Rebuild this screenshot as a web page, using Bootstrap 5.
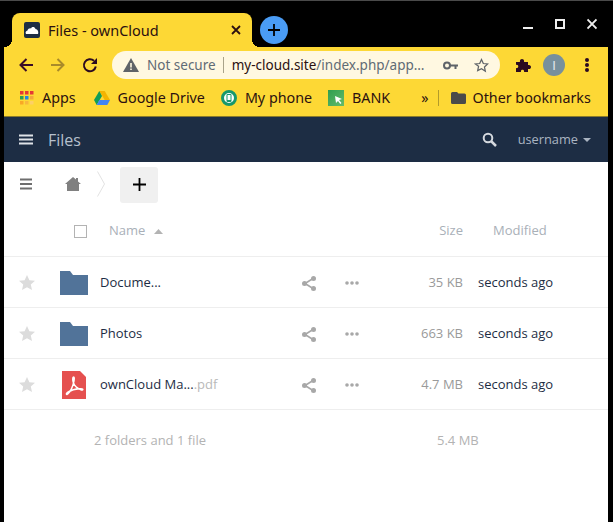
<!DOCTYPE html>
<html lang="en">
<head>
  <meta charset="UTF-8" />
  <meta name="viewport" content="width=device-width, initial-scale=1" />
  <title>Files - ownCloud</title>
  <link href="https://cdn.jsdelivr.net/npm/bootstrap@5.3.0/dist/css/bootstrap.min.css" rel="stylesheet" />
  <style>
    html, body { height: 100%; }
    body {
      background: #000;
      overflow: hidden;
      font-family: "Open Sans", sans-serif;
      color: #1d2d44;
    }
    .top-edge { height: 1px; background: #4a4a4a; }
    .win-frame { margin: 0 5px 0 4px; height: 521px; }
    .tab-strip { height: 46px; padding-left: 8px; }
    .file-tab {
      width: 240px;
      height: 34px;
      margin-top: 12px;
      padding: 0 11px 0 12px;
      background: #fdd835;
      border-radius: 8px 8px 0 0;
      color: #2b1010;
      font: 14.5px "Noto Sans", sans-serif;
      position: relative;
    }
    .file-tab::before, .file-tab::after {
      content: "";
      position: absolute;
      bottom: 0;
      width: 8px;
      height: 8px;
    }
    .file-tab::before { left: -8px; background: radial-gradient(circle at 0 0, transparent 8px, #fdd835 8px); }
    .file-tab::after { right: -8px; background: radial-gradient(circle at 100% 0, transparent 8px, #fdd835 8px); }
    .tab-logo { width: 16px; height: 16px; border-radius: 2px; background: #1d2d44; margin-right: 8px; }
    .new-tab { width: 28px; height: 28px; margin: 15px 0 0 8px; border-radius: 50%; background: #4a9cf5; }
    .win-btns { gap: 22px; padding: 16px 11px 0 0; }
    .tool-row { height: 36px; background: #fdd835; }
    .tool-btn { width: 16px; flex: none; }
    .tool-first { margin-left: 14px; }
    .url-pill {
      width: 388px;
      height: 28px;
      margin-left: 14px;
      padding: 0 11px 0 11px;
      border-radius: 14px;
      background: #fff8e1;
      font: 13.5px "Noto Sans", sans-serif;
      white-space: nowrap;
      flex: none;
    }
    .url-note { color: #5f6b75; }
    .url-sep { width: 1px; height: 16px; background: #a9a389; margin: 0 8px 0 7px; }
    .url-host { color: #2b1010; }
    .url-path { color: #5f6b75; }
    .ext-icon { margin-left: 15px; flex: none; }
    .avatar-dot { width: 22px; height: 22px; margin-left: 12px; border-radius: 50%; background: #78909c; color: #e3e9ec; font: 13px "Liberation Sans", sans-serif; flex: none; }
    .tool-dots { margin-left: 20px; gap: 1px; flex: none; }
    .tool-dots span { display: block; width: 4px; height: 4px; border-radius: 50%; background: #2b0a20; }
    .mark-row {
      height: 34px;
      padding-bottom: 4px;
      background: #fdd835;
      border-bottom: 1px solid #8a7a2a;
      color: #2b1010;
      font: 14.3px "Noto Sans", sans-serif;
      white-space: nowrap;
    }
    .mark-sep { width: 1px; height: 16px; background: #b39b2a; margin: 0 12px 0 9px; }
    .mark-more { margin-left: 31px; }
    .drive-icon { margin: 0 8px 0 18px; flex: none; }
    .folder-mark { margin-right: 7px; flex: none; }
    .app-head { height: 45px; background: #1d2d44; color: #c9d0da; padding: 0 17px 0 15px; }
    .app-title { font-size: 16px; margin-left: 15px; color: #b6c0cd; }
    .app-user { font-size: 12.8px; color: #aab4c1; margin-left: 21px; padding-top: 1px; }
    .caret-down { width: 0; height: 0; border: 4px solid transparent; border-top-color: #aab4c1; border-bottom-width: 0; margin-left: 5px; }
    .files-pane { background: #fff; height: 360px; font-size: 13px; }
    .crumb-row { height: 43px; padding: 1px 0 0 16px; }
    .crumb-home { margin-left: 33px; }
    .crumb-step { margin-left: 16px; }
    .crumb-add { width: 38px; height: 36px; margin: 1px 0 0 14px; border-radius: 3px; background: #f0f0f0; }
    .list-head { height: 52px; padding-top: 1px; color: #a9b0b8; font-size: 13px; border-bottom: 1px solid #eee; }
    .file-line { height: 51px; padding-top: 1px; border-bottom: 1px solid #eee; color: #1d2d44; }
    .head-pick { width: 105px; flex: none; padding-left: 70px; }
    .head-name { width: 286px; flex: none; }
    .head-size { width: 68px; flex: none; text-align: right; }
    .head-mod { padding-left: 30px; white-space: nowrap; }
    .col-star { width: 56px; padding-left: 15px; flex: none; }
    .col-star svg { display: block; }
    .col-name { width: 242px; flex: none; white-space: nowrap; }
    .col-share { width: 43px; flex: none; }
    .col-more { width: 50px; flex: none; }
    .col-size { width: 68px; flex: none; text-align: right; color: #9a9a9a; }
    .col-mod { padding-left: 15px; white-space: nowrap; }
    .file-icon { margin-right: 12px; flex: none; }
    .pick-box { width: 13px; height: 13px; border: 1px solid #b3b3b3; }
    .sort-caret { margin-left: 9px; }
    .ext-part { color: #b9b9b9; }
    .sum-line { height: 61px; color: #b3b3b3; }
    .sum-text { width: 377px; flex: none; padding-left: 34px; margin-left: 56px; }
  </style>
</head>
<body>
  <div class="top-edge"></div>
  <div class="win-frame d-flex flex-column">
    <div class="tab-strip d-flex flex-shrink-0">
      <div class="file-tab d-flex align-items-center">
        <span class="tab-logo d-flex align-items-center justify-content-center flex-shrink-0">
          <svg width="14" height="9" viewBox="0 0 14 9"><path fill="#fff" d="M1 8c-1-2 0-3 1.500-3.500C3 2.500 5 2 6 2.500 7 .5 9.500.5 10.500 3 12.500 3 14 6 13 8z"/></svg>
        </span>
        <span class="flex-grow-1">Files - ownCloud</span>
        <svg width="10" height="10" viewBox="0 0 10 10"><path d="M1 1l8 8M9 1l-8 8" stroke="#2b1010" stroke-width="1.800"/></svg>
      </div>
      <div class="new-tab d-flex align-items-center justify-content-center">
        <svg width="14" height="14" viewBox="0 0 14 14"><path d="M7 1v12M1 7h12" stroke="#000" stroke-width="1.800"/></svg>
      </div>
      <div class="win-btns d-flex ms-auto">
        <svg width="10" height="14" viewBox="0 0 10 14"><path d="M0 11h10" stroke="#eee" stroke-width="2"/></svg>
        <svg width="10" height="14" viewBox="0 0 10 14"><rect x="1" y="3" width="8" height="8" fill="none" stroke="#eee" stroke-width="2"/></svg>
        <svg width="10" height="14" viewBox="0 0 10 14"><path d="M.5 2.500l9 9M9.500 2.500l-9 9" stroke="#eee" stroke-width="1.800"/></svg>
      </div>
    </div>

    <div class="tool-row d-flex align-items-center flex-shrink-0">
      <svg class="tool-first me-3 tool-btn" height="16" viewBox="0 0 16 16"><path d="M15 8H2.500M8.500 2L2.500 8l6 6" fill="none" stroke="#3a0c26" stroke-width="2"/></svg>
      <svg class="me-3 tool-btn" height="16" viewBox="0 0 16 16"><path d="M1 8h12.500M7.500 2l6 6-6 6" fill="none" stroke="#a98a2a" stroke-width="2"/></svg>
      <svg class="tool-btn" height="16" viewBox="0 0 16 16"><path d="M13.800 9.500A6 6 0 1 1 12 3.800" fill="none" stroke="#2b0a20" stroke-width="2"/><path d="M15 1v6H9z" fill="#2b0a20"/></svg>
      <div class="url-pill d-flex align-items-center">
        <svg width="16" height="14" viewBox="0 0 16 14" class="flex-shrink-0 me-2"><path d="M8 0l8 14H0z" fill="#5f6368"/><path d="M7.200 5h1.600v4.500H7.200zM7.200 10.500h1.600V12H7.200z" fill="#fff8e1"/></svg>
        <span class="url-note">Not secure</span>
        <span class="url-sep"></span>
        <span class="url-host">my-cloud.site</span><span class="url-path">/index.php/app…</span>
        <svg width="15" height="9" viewBox="0 0 15 9" class="ms-auto"><circle cx="4" cy="4.500" r="3" fill="none" stroke="#5f6368" stroke-width="2"/><path d="M7 3.500h8v2h-1.500V8h-2V5.500H7z" fill="#5f6368"/></svg>
        <svg width="15" height="15" viewBox="0 0 24 24" class="ms-3"><path d="M12 2.500l2.900 6.300 6.900.8-5.100 4.700 1.400 6.800L12 17l-6.100 3.100 1.400-6.800L2.200 9.600l6.900-.8z" fill="none" stroke="#5f6368" stroke-width="2"/></svg>
      </div>
      <svg width="16" height="16" viewBox="0 0 16 16" class="ext-icon"><path d="M1 5h4c-1-4 5-4 4 0h4v3c4-1 4 5 0 4v3H9c1-3-4-3-3 0H1v-4c3 1 3-4 0-3z" fill="#2b0a20"/></svg>
      <span class="avatar-dot d-flex align-items-center justify-content-center">I</span>
      <div class="tool-dots d-flex flex-column"><span></span><span></span><span></span></div>
    </div>

    <div class="mark-row d-flex align-items-center flex-shrink-0">
      <svg width="14" height="14" viewBox="0 0 14 14" class="ms-3 me-2 flex-shrink-0">
        <rect width="3.500" height="3.500" fill="#e53935"/><rect x="5" width="3.500" height="3.500" fill="#e53935"/><rect x="10" width="3.500" height="3.500" fill="#e53935"/>
        <rect y="5" width="3.500" height="3.500" fill="#2e9e4f"/><rect x="5" y="5" width="3.500" height="3.500" fill="#1e88e5"/><rect x="10" y="5" width="3.500" height="3.500" fill="#f4a93a"/>
        <rect y="10" width="3.500" height="3.500" fill="#f9a825"/><rect x="5" y="10" width="3.500" height="3.500" fill="#f6b73c"/><rect x="10" y="10" width="3.500" height="3.500" fill="#fdd066"/>
      </svg>
      <span>Apps</span>
      <svg width="16" height="14" viewBox="0 0 16 14" class="drive-icon"><path d="M5.300 0h5.400L16 9h-5.300z" fill="#f4b400"/><path d="M5.300 0L0 9l2.700 5L8 5z" fill="#0f9d58"/><path d="M2.700 14h10.600L16 9H5.300z" fill="#4285f4"/></svg>
      <span>Google Drive</span>
      <svg width="16" height="16" viewBox="0 0 16 16" class="ms-3 me-2 flex-shrink-0"><circle cx="8" cy="8" r="6.500" fill="#fff" stroke="#17986b" stroke-width="3"/><rect x="5.500" y="4" width="5" height="8" rx="1" fill="#17986b"/><rect x="6.500" y="5" width="3" height="5" fill="#fff"/></svg>
      <span>My phone</span>
      <svg width="16" height="16" viewBox="0 0 16 16" class="ms-3 me-2 flex-shrink-0"><defs><linearGradient id="bankFill" x1="0" y1="0" x2="1" y2="1"><stop offset="0" stop-color="#2e9e4f"/><stop offset="1" stop-color="#66bb6a"/></linearGradient></defs><rect width="16" height="16" fill="url(#bankFill)"/><path d="M7 6l7 3-3 1 2.500 3-1.200 1-2.300-3-2 2z" fill="#fff"/></svg>
      <span>BANK</span>
      <span class="mark-more">»</span>
      <span class="mark-sep"></span>
      <svg width="15" height="12" viewBox="0 0 15 12" class="folder-mark"><path d="M0 1.500A1.500 1.500 0 0 1 1.500 0H6l1.500 1.500H13.500A1.500 1.500 0 0 1 15 3v7.500A1.500 1.500 0 0 1 13.500 12h-12A1.500 1.500 0 0 1 0 10.500z" fill="#4a4a4a"/></svg>
      <span>Other bookmarks</span>
    </div>

    <header class="app-head d-flex align-items-center flex-shrink-0">
      <svg width="14" height="11" viewBox="0 0 14 11"><path d="M0 1.500h14M0 5.500h14M0 9.500h14" stroke="#dfe3e8" stroke-width="2"/></svg>
      <span class="app-title">Files</span>
      <svg width="15" height="15" viewBox="0 0 15 15" class="ms-auto"><circle cx="6" cy="6" r="4.300" fill="none" stroke="#d5d9df" stroke-width="2"/><path d="M9 9l5 5" stroke="#d5d9df" stroke-width="2.500"/></svg>
      <span class="app-user">username</span>
      <span class="caret-down"></span>
    </header>

    <main class="files-pane">
      <div class="crumb-row d-flex align-items-center">
        <svg width="12" height="12" viewBox="0 0 12 12"><path d="M0 1.500h12M0 6h12M0 10.500h12" stroke="#6e6e6e" stroke-width="2"/></svg>
        <svg width="16" height="14" viewBox="0 0 16 14" class="crumb-home"><path d="M8 0l3 2.600V1h2v3.400L16 7h-2v7H2V7H0z" fill="#808080"/></svg>
        <svg width="9" height="26" viewBox="0 0 9 26" class="crumb-step"><path d="M.5.500l7 12.500-7 12.500" fill="none" stroke="#e2e2e2"/></svg>
        <span class="crumb-add d-flex align-items-center justify-content-center">
          <svg width="13" height="13" viewBox="0 0 13 13"><path d="M6.500 0v13M0 6.500h13" stroke="#000" stroke-width="1.800"/></svg>
        </span>
      </div>

      <div class="list-head d-flex align-items-center">
        <div class="head-pick"><div class="pick-box"></div></div>
        <div class="head-name d-flex align-items-center">Name
          <svg width="9" height="5" viewBox="0 0 9 5" class="sort-caret"><path d="M4.500 0L9 5H0z" fill="#b3b3b3"/></svg>
        </div>
        <div class="head-size">Size</div>
        <div class="head-mod">Modified</div>
      </div>

      <div class="file-line d-flex align-items-center">
        <div class="col-star"><svg width="16" height="15" viewBox="0 0 16 15"><path d="M8 0l2.400 5.200 5.600.6-4.200 3.800 1.200 5.400L8 12.200 3 15l1.200-5.400L0 5.800l5.600-.6z" fill="#dcdcdc"/></svg></div>
        <div class="col-name d-flex align-items-center">
          <svg width="28" height="24" viewBox="0 0 28 24" class="file-icon"><path d="M0 0h10l3 4h15v20H0z" fill="#517399"/></svg>
          <span>Docume...</span>
        </div>
        <div class="col-share"><svg width="14" height="15" viewBox="0 0 14 15"><path d="M11 2.500L3 7.500l8 5" fill="none" stroke="#a8a8a8" stroke-width="1.600"/><circle cx="11.500" cy="2.500" r="2.500" fill="#a8a8a8"/><circle cx="2.500" cy="7.500" r="2.500" fill="#a8a8a8"/><circle cx="11.500" cy="12.500" r="2.500" fill="#a8a8a8"/></svg></div>
        <div class="col-more"><svg width="14" height="4" viewBox="0 0 14 4"><circle cx="2" cy="2" r="1.800" fill="#a8a8a8"/><circle cx="7" cy="2" r="1.800" fill="#a8a8a8"/><circle cx="12" cy="2" r="1.800" fill="#a8a8a8"/></svg></div>
        <div class="col-size">35 KB</div>
        <div class="col-mod">seconds ago</div>
      </div>

      <div class="file-line d-flex align-items-center">
        <div class="col-star"><svg width="16" height="15" viewBox="0 0 16 15"><path d="M8 0l2.400 5.200 5.600.6-4.200 3.800 1.200 5.400L8 12.200 3 15l1.200-5.400L0 5.800l5.600-.6z" fill="#dcdcdc"/></svg></div>
        <div class="col-name d-flex align-items-center">
          <svg width="28" height="24" viewBox="0 0 28 24" class="file-icon"><path d="M0 0h10l3 4h15v20H0z" fill="#517399"/></svg>
          <span>Photos</span>
        </div>
        <div class="col-share"><svg width="14" height="15" viewBox="0 0 14 15"><path d="M11 2.500L3 7.500l8 5" fill="none" stroke="#a8a8a8" stroke-width="1.600"/><circle cx="11.500" cy="2.500" r="2.500" fill="#a8a8a8"/><circle cx="2.500" cy="7.500" r="2.500" fill="#a8a8a8"/><circle cx="11.500" cy="12.500" r="2.500" fill="#a8a8a8"/></svg></div>
        <div class="col-more"><svg width="14" height="4" viewBox="0 0 14 4"><circle cx="2" cy="2" r="1.800" fill="#a8a8a8"/><circle cx="7" cy="2" r="1.800" fill="#a8a8a8"/><circle cx="12" cy="2" r="1.800" fill="#a8a8a8"/></svg></div>
        <div class="col-size">663 KB</div>
        <div class="col-mod">seconds ago</div>
      </div>

      <div class="file-line d-flex align-items-center">
        <div class="col-star"><svg width="16" height="15" viewBox="0 0 16 15"><path d="M8 0l2.400 5.200 5.600.6-4.200 3.800 1.200 5.400L8 12.200 3 15l1.200-5.400L0 5.800l5.600-.6z" fill="#dcdcdc"/></svg></div>
        <div class="col-name d-flex align-items-center">
          <svg width="28" height="28" viewBox="0 0 28 28" class="file-icon"><path d="M2 0h18l6 6v22H2z" fill="#e5504f"/><path d="M13.500 6c-1 0-1 3 0 6 1 3 3 5 8 7 1.500.5 2-1 0-1.200-4-.5-10 1-14 3.500-2 1.500-1 3 .5 1.500 2.500-2.500 5-8 6-13 .3-2 .5-3.800-.5-3.800z" fill="none" stroke="#fff" stroke-width="1.500"/></svg>
          <span>ownCloud Ma...</span><span class="ext-part">.pdf</span>
        </div>
        <div class="col-share"><svg width="14" height="15" viewBox="0 0 14 15"><path d="M11 2.500L3 7.500l8 5" fill="none" stroke="#a8a8a8" stroke-width="1.600"/><circle cx="11.500" cy="2.500" r="2.500" fill="#a8a8a8"/><circle cx="2.500" cy="7.500" r="2.500" fill="#a8a8a8"/><circle cx="11.500" cy="12.500" r="2.500" fill="#a8a8a8"/></svg></div>
        <div class="col-more"><svg width="14" height="4" viewBox="0 0 14 4"><circle cx="2" cy="2" r="1.800" fill="#a8a8a8"/><circle cx="7" cy="2" r="1.800" fill="#a8a8a8"/><circle cx="12" cy="2" r="1.800" fill="#a8a8a8"/></svg></div>
        <div class="col-size">4.7 MB</div>
        <div class="col-mod">seconds ago</div>
      </div>

      <div class="sum-line d-flex align-items-center">
        <div class="sum-text">2 folders and 1 file</div>
        <div class="sum-size">5.4 MB</div>
      </div>
    </main>
  </div>
  <script src="https://cdn.jsdelivr.net/npm/bootstrap@5.3.0/dist/js/bootstrap.bundle.min.js"></script>
</body>
</html>
